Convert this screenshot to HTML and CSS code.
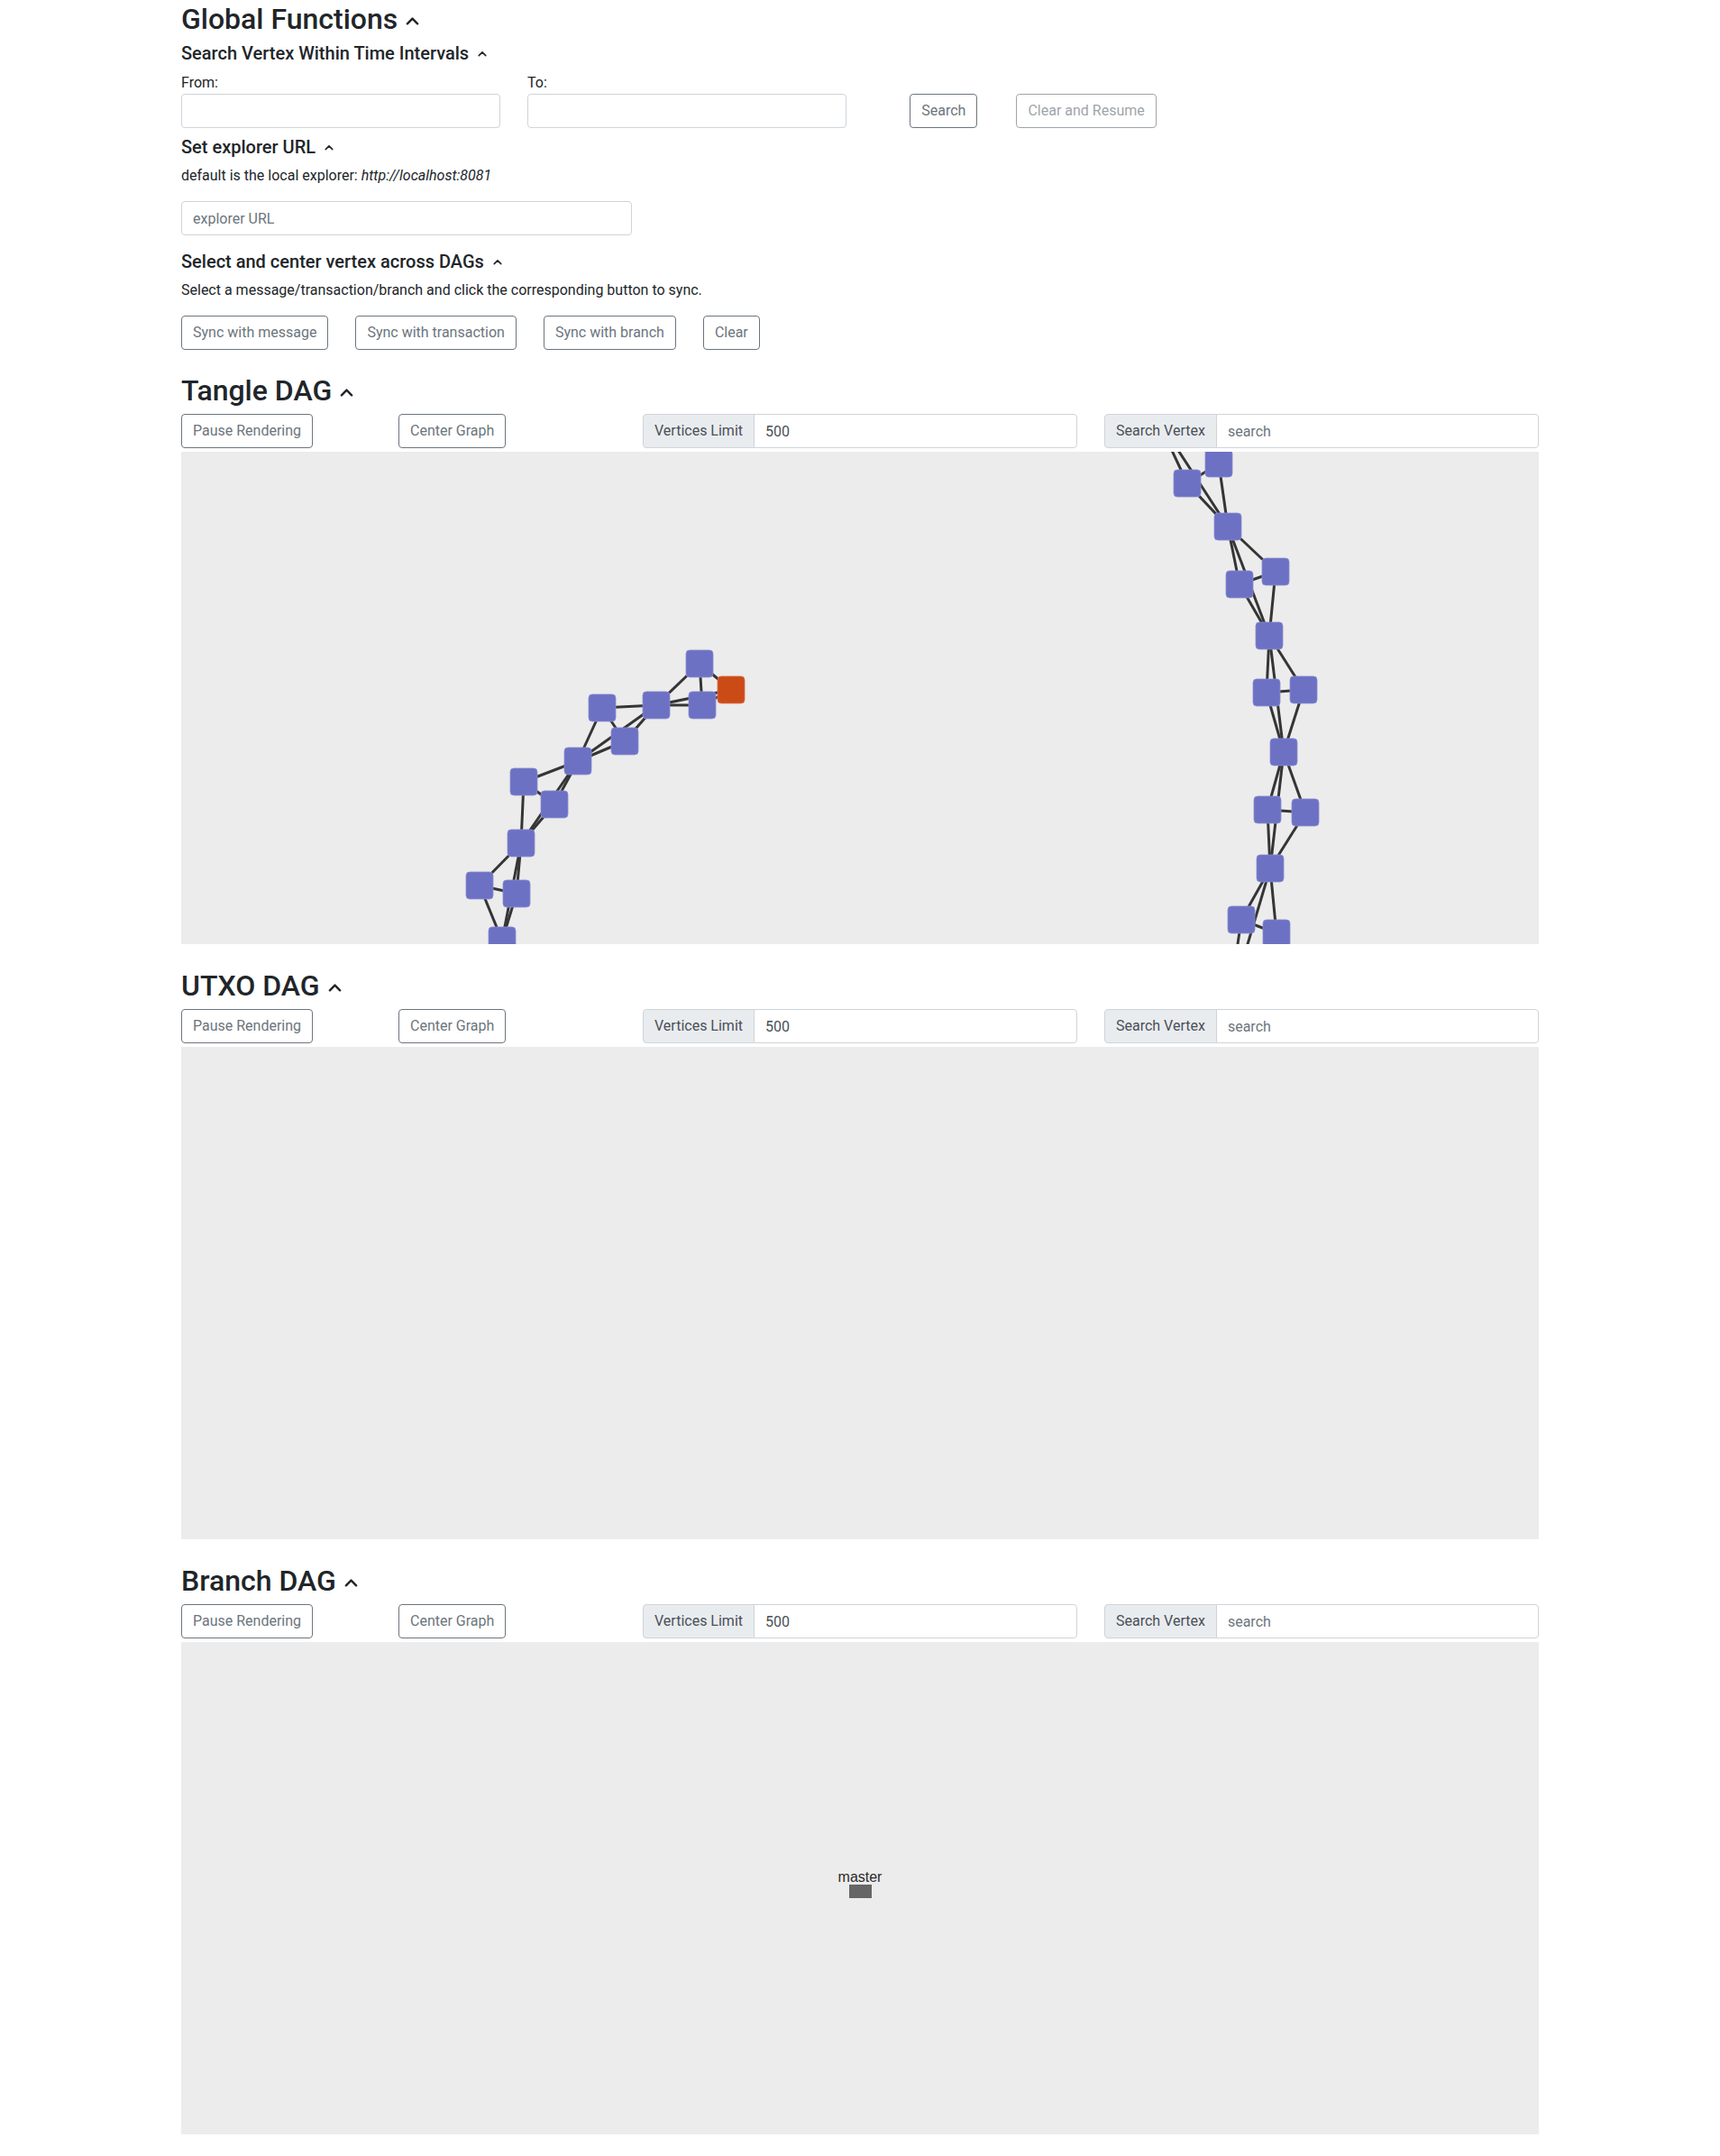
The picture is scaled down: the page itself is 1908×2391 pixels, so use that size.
FILE: index.html
```html
<!DOCTYPE html>
<html lang="en">
<head>
<meta charset="utf-8">
<title>DAGs Visualizer</title>
<link rel="stylesheet" href="styles.css">
</head>
<body>
<div class="page">
  <section class="global">
    <h3 class="h-main">Global Functions <svg class="chev chev-lg" viewBox="0 0 16 10"><polyline points="2,8.5 8,2.5 14,8.5"/></svg></h3>
    <h5 class="h-sub">Search Vertex Within Time Intervals <svg class="chev chev-sm" viewBox="0 0 16 10"><polyline points="2,8.5 8,2.5 14,8.5"/></svg></h5>
    <div class="time-row">
      <div class="field">
        <label class="field-label">From:</label>
        <input class="input" type="text">
      </div>
      <div class="field">
        <label class="field-label">To:</label>
        <input class="input" type="text">
      </div>
      <div class="time-actions">
        <button class="btn">Search</button>
        <button class="btn btn-disabled">Clear and Resume</button>
      </div>
    </div>
    <h5 class="h-sub">Set explorer URL <svg class="chev chev-sm" viewBox="0 0 16 10"><polyline points="2,8.5 8,2.5 14,8.5"/></svg></h5>
    <p class="text">default is the local explorer: <em>http://localhost:8081</em></p>
    <input class="input url-input" type="text" placeholder="explorer URL">
    <h5 class="h-sub h-sync">Select and center vertex across DAGs <svg class="chev chev-sm" viewBox="0 0 16 10"><polyline points="2,8.5 8,2.5 14,8.5"/></svg></h5>
    <p class="text">Select a message/transaction/branch and click the corresponding button to sync.</p>
    <div class="sync-row">
      <button class="btn">Sync with message</button>
      <button class="btn">Sync with transaction</button>
      <button class="btn">Sync with branch</button>
      <button class="btn">Clear</button>
    </div>
  </section>

  <section class="dag dag--first">
    <h3 class="h-main">Tangle DAG <svg class="chev chev-lg" viewBox="0 0 16 10"><polyline points="2,8.5 8,2.5 14,8.5"/></svg></h3>
    <div class="controls">
      <div class="control-btns">
        <div><button class="btn">Pause Rendering</button></div>
        <div><button class="btn">Center Graph</button></div>
      </div>
      <div class="igroup"><span class="igroup-label">Vertices Limit</span><input class="input igroup-input" type="text" value="500"></div>
      <div class="igroup"><span class="igroup-label">Search Vertex</span><input class="input igroup-input" type="text" placeholder="search"></div>
    </div>
    <div class="graph">
      <svg viewBox="0 0 1506 546" preserveAspectRatio="none">
        <g class="edges">
          <line x1="575" y1="235" x2="527" y2="281"/>
          <line x1="575" y1="235" x2="578" y2="281"/>
          <line x1="575" y1="235" x2="610" y2="264"/>
          <line x1="527" y1="281" x2="578" y2="281"/>
          <line x1="527" y1="281" x2="610" y2="264"/>
          <line x1="578" y1="281" x2="610" y2="264"/>
          <line x1="467" y1="284" x2="527" y2="281"/>
          <line x1="467" y1="284" x2="492" y2="321"/>
          <line x1="467" y1="284" x2="440" y2="343"/>
          <line x1="527" y1="281" x2="492" y2="321"/>
          <line x1="527" y1="281" x2="440" y2="343"/>
          <line x1="492" y1="321" x2="440" y2="343"/>
          <line x1="440" y1="343" x2="380" y2="366"/>
          <line x1="440" y1="343" x2="414" y2="391"/>
          <line x1="440" y1="343" x2="377" y2="434"/>
          <line x1="380" y1="366" x2="414" y2="391"/>
          <line x1="380" y1="366" x2="377" y2="434"/>
          <line x1="414" y1="391" x2="377" y2="434"/>
          <line x1="377" y1="434" x2="331" y2="481"/>
          <line x1="377" y1="434" x2="372" y2="490"/>
          <line x1="377" y1="434" x2="356" y2="542"/>
          <line x1="331" y1="481" x2="372" y2="490"/>
          <line x1="331" y1="481" x2="356" y2="542"/>
          <line x1="372" y1="490" x2="356" y2="542"/>

          <line x1="1081" y1="-40" x2="1116" y2="35"/>
          <line x1="1081" y1="-40" x2="1161" y2="83"/>
          <line x1="1108" y1="-28" x2="1151" y2="13"/>
          <line x1="1151" y1="13" x2="1116" y2="35"/>
          <line x1="1151" y1="13" x2="1161" y2="83"/>
          <line x1="1116" y1="35" x2="1161" y2="83"/>
          <line x1="1161" y1="83" x2="1214" y2="133"/>
          <line x1="1161" y1="83" x2="1174" y2="147"/>
          <line x1="1161" y1="83" x2="1207" y2="204"/>
          <line x1="1174" y1="147" x2="1214" y2="133"/>
          <line x1="1174" y1="147" x2="1207" y2="204"/>
          <line x1="1214" y1="133" x2="1207" y2="204"/>
          <line x1="1207" y1="204" x2="1204" y2="267"/>
          <line x1="1207" y1="204" x2="1245" y2="264"/>
          <line x1="1207" y1="204" x2="1223" y2="333"/>
          <line x1="1204" y1="267" x2="1245" y2="264"/>
          <line x1="1204" y1="267" x2="1223" y2="333"/>
          <line x1="1245" y1="264" x2="1223" y2="333"/>
          <line x1="1223" y1="333" x2="1205" y2="397"/>
          <line x1="1223" y1="333" x2="1247" y2="400"/>
          <line x1="1223" y1="333" x2="1208" y2="462"/>
          <line x1="1205" y1="397" x2="1247" y2="400"/>
          <line x1="1205" y1="397" x2="1208" y2="462"/>
          <line x1="1247" y1="400" x2="1208" y2="462"/>
          <line x1="1208" y1="462" x2="1176" y2="519"/>
          <line x1="1208" y1="462" x2="1215" y2="534"/>
          <line x1="1176" y1="519" x2="1215" y2="534"/>
          <line x1="1176" y1="519" x2="1161" y2="620"/>
          <line x1="1208" y1="462" x2="1161" y2="620"/>
        </g>
        <g class="nodes">
          <rect x="560" y="220" width="30" height="30" rx="4"/>
          <rect x="563" y="266" width="30" height="30" rx="4"/>
          <rect x="512" y="266" width="30" height="30" rx="4"/>
          <rect x="452" y="269" width="30" height="30" rx="4"/>
          <rect x="477" y="306" width="30" height="30" rx="4"/>
          <rect x="425" y="328" width="30" height="30" rx="4"/>
          <rect x="365" y="351" width="30" height="30" rx="4"/>
          <rect x="399" y="376" width="30" height="30" rx="4"/>
          <rect x="362" y="419" width="30" height="30" rx="4"/>
          <rect x="316" y="466" width="30" height="30" rx="4"/>
          <rect x="357" y="475" width="30" height="30" rx="4"/>
          <rect x="341" y="527" width="30" height="30" rx="4"/>

          <rect x="1136" y="-2" width="30" height="30" rx="4"/>
          <rect x="1101" y="20" width="30" height="30" rx="4"/>
          <rect x="1146" y="68" width="30" height="30" rx="4"/>
          <rect x="1199" y="118" width="30" height="30" rx="4"/>
          <rect x="1159" y="132" width="30" height="30" rx="4"/>
          <rect x="1192" y="189" width="30" height="30" rx="4"/>
          <rect x="1189" y="252" width="30" height="30" rx="4"/>
          <rect x="1230" y="249" width="30" height="30" rx="4"/>
          <rect x="1208" y="318" width="30" height="30" rx="4"/>
          <rect x="1190" y="382" width="30" height="30" rx="4"/>
          <rect x="1232" y="385" width="30" height="30" rx="4"/>
          <rect x="1193" y="447" width="30" height="30" rx="4"/>
          <rect x="1161" y="504" width="30" height="30" rx="4"/>
          <rect x="1200" y="519" width="30" height="30" rx="4"/>
        </g>
        <rect class="node-selected" x="595" y="249" width="30" height="30" rx="4"/>
      </svg>
    </div>
  </section>

  <section class="dag">
    <h3 class="h-main">UTXO DAG <svg class="chev chev-lg" viewBox="0 0 16 10"><polyline points="2,8.5 8,2.5 14,8.5"/></svg></h3>
    <div class="controls">
      <div class="control-btns">
        <div><button class="btn">Pause Rendering</button></div>
        <div><button class="btn">Center Graph</button></div>
      </div>
      <div class="igroup"><span class="igroup-label">Vertices Limit</span><input class="input igroup-input" type="text" value="500"></div>
      <div class="igroup"><span class="igroup-label">Search Vertex</span><input class="input igroup-input" type="text" placeholder="search"></div>
    </div>
    <div class="graph"></div>
  </section>

  <section class="dag">
    <h3 class="h-main">Branch DAG <svg class="chev chev-lg" viewBox="0 0 16 10"><polyline points="2,8.5 8,2.5 14,8.5"/></svg></h3>
    <div class="controls">
      <div class="control-btns">
        <div><button class="btn">Pause Rendering</button></div>
        <div><button class="btn">Center Graph</button></div>
      </div>
      <div class="igroup"><span class="igroup-label">Vertices Limit</span><input class="input igroup-input" type="text" value="500"></div>
      <div class="igroup"><span class="igroup-label">Search Vertex</span><input class="input igroup-input" type="text" placeholder="search"></div>
    </div>
    <div class="graph">
      <svg viewBox="0 0 1506 546" preserveAspectRatio="none">
        <text class="branch-label" x="753" y="266" text-anchor="middle">master</text>
        <rect class="branch-node" x="741" y="269" width="25" height="15"/>
      </svg>
    </div>
  </section>
</div>
</body>
</html>
```

FILE: styles.css
```css
* {
  box-sizing: border-box;
}

body {
  margin: 0;
  font-family: Roboto, "Liberation Sans", sans-serif;
  font-size: 16px;
  line-height: 1.5;
  color: #212529;
  background: #fff;
}

.page {
  width: 1506px;
  margin: 0 auto;
  padding: 3px 0 24px;
}

.h-main {
  display: flex;
  align-items: center;
  gap: 9px;
  margin: 0 0 8px;
  font-size: 32px;
  font-weight: 500;
  line-height: 36px;
}

.h-sub {
  display: flex;
  align-items: center;
  gap: 10px;
  margin: 0 0 8px;
  font-size: 20px;
  font-weight: 500;
  line-height: 24px;
}

.chev {
  fill: none;
  stroke: #212529;
  stroke-linecap: round;
  stroke-linejoin: round;
}

.chev-lg {
  width: 15px;
  height: 10px;
  stroke-width: 2.6;
  margin-top: 3px;
}

.chev-sm {
  width: 10px;
  height: 7px;
  stroke-width: 2.6;
  margin-top: 1px;
}

.time-row {
  display: grid;
  grid-template-columns: repeat(4, 1fr);
  column-gap: 30px;
  align-items: end;
  margin-bottom: 9px;
}

.field-label {
  display: block;
  line-height: 24px;
  padding-top: 1px;
}

.time-actions {
  display: flex;
  justify-content: center;
  gap: 43px;
}

.input {
  display: block;
  width: 100%;
  height: 38px;
  padding: 6px 12px;
  font-family: inherit;
  font-size: 16px;
  line-height: 24px;
  color: #495057;
  background: #fff;
  border: 1px solid #ced4da;
  border-radius: 4px;
}

.input::placeholder {
  color: #6c757d;
}

.text {
  margin: 0 0 16px;
}

.url-input {
  width: 500px;
  margin-bottom: 17px;
}

.btn {
  height: 38px;
  padding: 0 12px;
  font-family: inherit;
  font-size: 16px;
  line-height: 36px;
  color: #6c757d;
  background: transparent;
  border: 1px solid #6c757d;
  border-radius: 4px;
  white-space: nowrap;
}

.btn-disabled {
  opacity: 0.65;
}

.sync-row {
  display: flex;
  gap: 30px;
}

.dag {
  margin-top: 28px;
}

.dag--first {
  margin-top: 27px;
}

.controls {
  display: grid;
  grid-template-columns: repeat(3, 1fr);
  column-gap: 30px;
}

.control-btns {
  display: grid;
  grid-template-columns: 1fr 1fr;
}

.igroup {
  display: flex;
  height: 38px;
}

.igroup-label {
  padding: 0 12px;
  line-height: 36px;
  color: #495057;
  background: #e9ecef;
  border: 1px solid #ced4da;
  border-radius: 4px 0 0 4px;
  white-space: nowrap;
}

.igroup-input {
  flex: 1;
  min-width: 0;
  margin-left: -1px;
  border-radius: 0 4px 4px 0;
}

.graph {
  height: 546px;
  margin-top: 4px;
  background: #ececec;
  overflow: hidden;
}

.graph svg {
  display: block;
  width: 100%;
  height: 100%;
}

.edges line {
  stroke: #353535;
  stroke-width: 3;
}

.nodes rect {
  fill: #6c71c4;
  stroke: #8a8ed2;
  stroke-width: 0.8;
}

.node-selected {
  fill: #cb4b16;
  stroke: #d8744d;
  stroke-width: 0.8;
}

.branch-label {
  font-family: "Liberation Sans", Arial, sans-serif;
  font-size: 16px;
  fill: #2a2a2a;
}

.branch-node {
  fill: #666;
}
```
